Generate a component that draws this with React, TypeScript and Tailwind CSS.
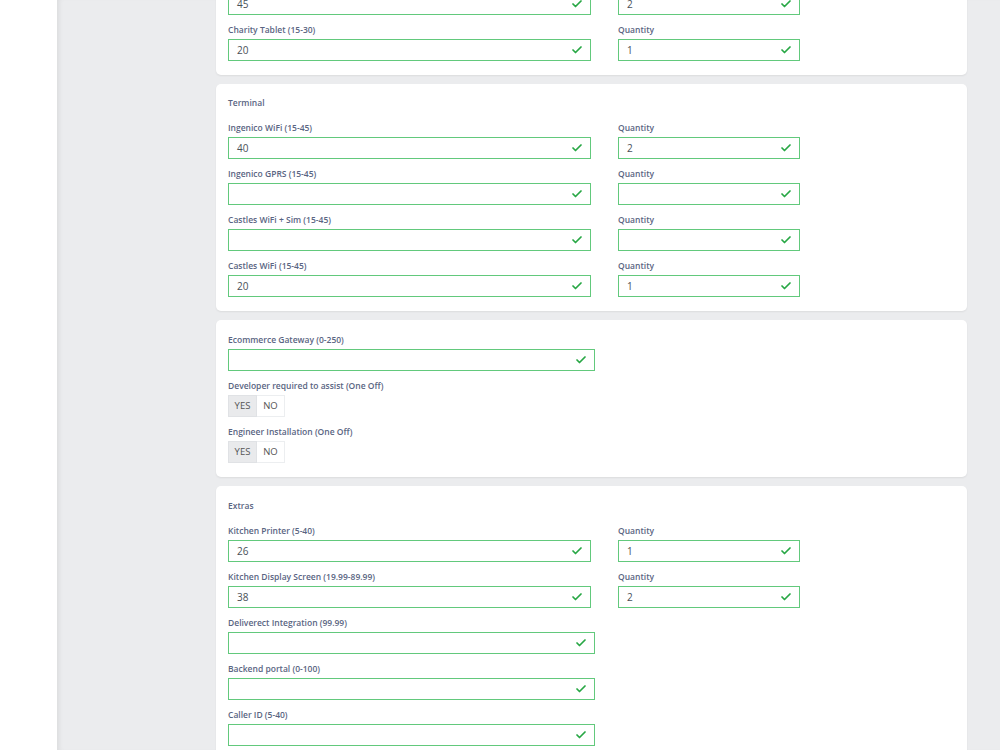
import { Check } from 'lucide-react';

type Field = {
  label: string;
  value?: string;
  qty?: string;
  hasQty?: boolean;
};

const tabletFields: Field[] = [
  { label: 'Tablet (15-45)', value: '45', qty: '2', hasQty: true },
  { label: 'Charity Tablet (15-30)', value: '20', qty: '1', hasQty: true },
];

const terminalFields: Field[] = [
  { label: 'Ingenico WiFi (15-45)', value: '40', qty: '2', hasQty: true },
  { label: 'Ingenico GPRS (15-45)', hasQty: true },
  { label: 'Castles WiFi + Sim (15-45)', hasQty: true },
  { label: 'Castles WiFi (15-45)', value: '20', qty: '1', hasQty: true },
];

const extrasFields: Field[] = [
  { label: 'Kitchen Printer (5-40)', value: '26', qty: '1', hasQty: true },
  { label: 'Kitchen Display Screen (19.99-89.99)', value: '38', qty: '2', hasQty: true },
  { label: 'Deliverect Integration (99.99)' },
  { label: 'Backend portal (0-100)' },
  { label: 'Caller ID (5-40)' },
];

const Label = ({ children }: { children: React.ReactNode }) => (
  <div className="h-[12px] leading-[12px] text-[8.5px] font-semibold text-[#5a6582] mb-[3px] whitespace-nowrap">
    {children}
  </div>
);

const ValidInput = ({ value, width }: { value?: string; width: string }) => (
  <div
    className={`${width} h-[22px] border border-[#62c97c] bg-white flex items-center justify-between pl-[8px] pr-[7px]`}
  >
    <span className="text-[10px] text-[#495057]">{value}</span>
    <Check className="w-[12px] h-[12px] text-[#28a745]" strokeWidth={3.5} />
  </div>
);

const FieldRow = ({ field }: { field: Field }) => {
  if (!field.hasQty) {
    return (
      <div>
        <Label>{field.label}</Label>
        <ValidInput value={field.value} width="w-[367px]" />
      </div>
    );
  }
  return (
    <div className="flex gap-[27px]">
      <div>
        <Label>{field.label}</Label>
        <ValidInput value={field.value} width="w-[363px]" />
      </div>
      <div>
        <Label>Quantity</Label>
        <ValidInput value={field.qty} width="w-[182px]" />
      </div>
    </div>
  );
};

const Toggle = () => (
  <div className="flex h-[22px] w-[57px] text-[9.5px] text-[#555]">
    <div className="flex-1 flex items-center justify-center bg-[#e9eaec] border border-[#e0e2e5]">
      YES
    </div>
    <div className="flex-1 flex items-center justify-center bg-white border border-l-0 border-[#eceef0]">
      NO
    </div>
  </div>
);

const Card = ({ children, className = '' }: { children: React.ReactNode; className?: string }) => (
  <div className={`w-[751px] bg-white rounded-[5px] shadow-[0_1px_2px_rgba(0,0,0,0.07)] px-[12px] ${className}`}>
    {children}
  </div>
);

const Heading = ({ children }: { children: React.ReactNode }) => (
  <div className="h-[12px] leading-[12px] text-[8.5px] font-semibold text-[#5a6582] mb-[13px]">{children}</div>
);

export default function App() {
  return (
    <div
      className="flex h-[750px] overflow-hidden"
      style={{ fontFamily: '"Open Sans", "Noto Sans", sans-serif' }}
    >
      <div className="w-[57px] shrink-0 bg-white" />
      <div className="flex-1 bg-[#ebecee] shadow-[inset_5px_0_5px_-3px_rgba(0,0,0,0.07)]">
        <div className="ml-[159px] mt-[-61px] flex flex-col gap-[9px]">
          <Card className="pt-[14px] pb-[14px]">
            <Heading>Tablet</Heading>
            <div className="flex flex-col gap-[9px]">
              {tabletFields.map((f) => (
                <FieldRow key={f.label} field={f} />
              ))}
            </div>
          </Card>

          <Card className="pt-[13px] pb-[14px]">
            <Heading>Terminal</Heading>
            <div className="flex flex-col gap-[9px]">
              {terminalFields.map((f) => (
                <FieldRow key={f.label} field={f} />
              ))}
            </div>
          </Card>

          <Card className="pt-[14px] pb-[14px]">
            <div className="flex flex-col gap-[9px]">
              <FieldRow field={{ label: 'Ecommerce Gateway (0-250)' }} />
              <div>
                <Label>Developer required to assist (One Off)</Label>
                <Toggle />
              </div>
              <div>
                <Label>Engineer Installation (One Off)</Label>
                <Toggle />
              </div>
            </div>
          </Card>

          <Card className="pt-[14px] pb-[14px]">
            <Heading>Extras</Heading>
            <div className="flex flex-col gap-[9px]">
              {extrasFields.map((f) => (
                <FieldRow key={f.label} field={f} />
              ))}
            </div>
          </Card>
        </div>
      </div>
    </div>
  );
}
